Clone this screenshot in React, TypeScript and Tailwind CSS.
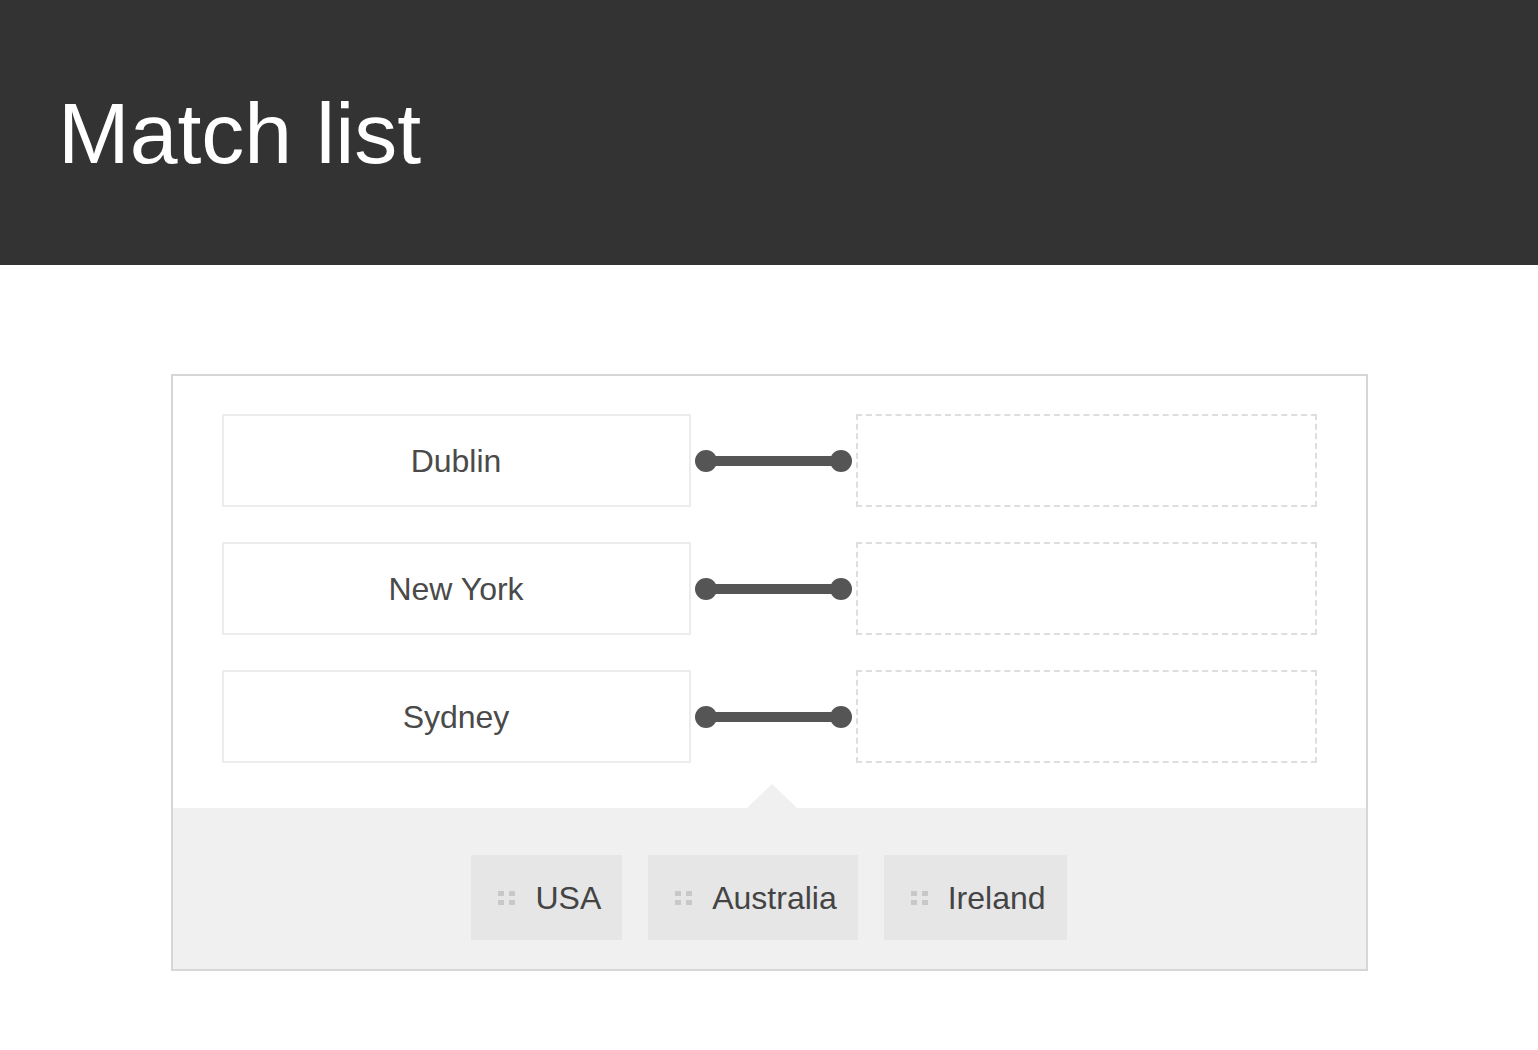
const sources = ["Dublin", "New York", "Sydney"];
const answers = ["USA", "Australia", "Ireland"];

function Grip() {
  return (
    <svg width="20" height="18" viewBox="0 0 20 18" className="shrink-0">
      <g fill="#c8c8c8">
        <rect x="1" y="2" width="6" height="5" />
        <rect x="12" y="2" width="6" height="5" />
        <rect x="1" y="11" width="6" height="5" />
        <rect x="12" y="11" width="6" height="5" />
      </g>
    </svg>
  );
}

function Connector() {
  return (
    <div className="flex w-[165px] shrink-0 items-center px-[4px]">
      <span className="h-[22px] w-[22px] shrink-0 rounded-full bg-[#555]" />
      <span className="-mx-[4px] h-[10px] flex-1 bg-[#555]" />
      <span className="h-[22px] w-[22px] shrink-0 rounded-full bg-[#555]" />
    </div>
  );
}

export default function App() {
  return (
    <div className="min-h-[1050px] bg-white font-['Liberation_Sans',Arial,sans-serif]">
      <header className="flex h-[265px] items-center bg-[#333333] px-[58px]">
        <h1 className="text-[86px] leading-none text-white">Match list</h1>
      </header>

      <main className="flex justify-center pt-[109px]">
        <div className="w-[1197px] border-2 border-[#d6d6d6] bg-white">
          <div className="flex flex-col gap-[35px] px-[49px] pt-[38px] pb-[45px]">
            {sources.map((s) => (
              <div key={s} className="flex h-[93px]">
                <div className="flex w-[469px] shrink-0 items-center justify-center border-2 border-[#ececec] text-[32px] text-[#4a4a4a]">
                  {s}
                </div>
                <Connector />
                <div className="flex-1 border-2 border-dashed border-[#dedede]" />
              </div>
            ))}
          </div>

          <div className="relative bg-[#f0f0f0] pt-[47px] pb-[29px]">
            <span className="absolute -top-[24px] left-[574px] h-0 w-0 border-x-[25px] border-b-[24px] border-x-transparent border-b-[#f0f0f0]" />
            <div className="flex justify-center gap-[26px]">
              {answers.map((a) => (
                <div
                  key={a}
                  className="flex h-[85px] items-center gap-[18px] bg-[#e6e6e6] pl-[26px] pr-[21px] text-[32px] text-[#444]"
                >
                  <Grip />
                  <span>{a}</span>
                </div>
              ))}
            </div>
          </div>
        </div>
      </main>
    </div>
  );
}
